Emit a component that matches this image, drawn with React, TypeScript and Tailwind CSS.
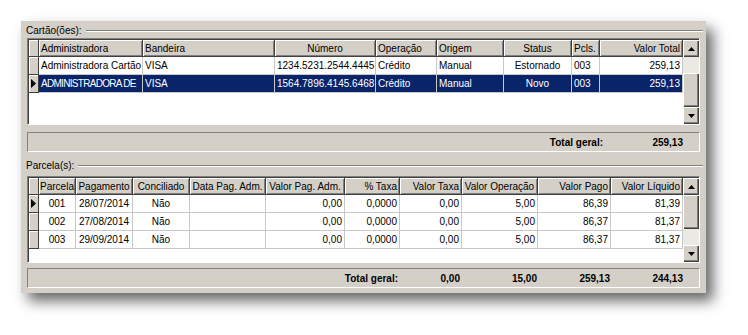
import React from "react";

type Align = "l" | "c" | "r";
type Col = { title: string; w: string; ha: Align; da: Align; tight?: boolean };

const just: Record<Align, string> = {
  l: "justify-start",
  c: "justify-center",
  r: "justify-end",
};

const cartaoCols: Col[] = [
  { title: "Administradora", w: "w-[104px]", ha: "l", da: "l", tight: true },
  { title: "Bandeira", w: "w-[132px]", ha: "l", da: "l" },
  { title: "Número", w: "w-[101px]", ha: "c", da: "l" },
  { title: "Operação", w: "w-[61px]", ha: "l", da: "l" },
  { title: "Origem", w: "w-[67px]", ha: "l", da: "l" },
  { title: "Status", w: "w-[68px]", ha: "c", da: "c" },
  { title: "Pcls.", w: "w-[28px]", ha: "l", da: "l" },
  { title: "Valor Total", w: "w-[83px]", ha: "r", da: "r" },
];

const cartaoRows = [
  ["Administradora Cartão", "VISA", "1234.5231.2544.4445", "Crédito", "Manual", "Estornado", "003", "259,13"],
  ["ADMINISTRADORA DE", "VISA", "1564.7896.4145.6468", "Crédito", "Manual", "Novo", "003", "259,13"],
];

const parcelaCols: Col[] = [
  { title: "Parcela", w: "w-[37px]", ha: "c", da: "c" },
  { title: "Pagamento", w: "w-[57px]", ha: "c", da: "c" },
  { title: "Conciliado", w: "w-[57px]", ha: "c", da: "c" },
  { title: "Data Pag. Adm.", w: "w-[76px]", ha: "c", da: "l" },
  { title: "Valor Pag. Adm.", w: "w-[79px]", ha: "c", da: "r" },
  { title: "% Taxa", w: "w-[55px]", ha: "r", da: "r" },
  { title: "Valor Taxa", w: "w-[62px]", ha: "r", da: "r" },
  { title: "Valor Operação", w: "w-[76px]", ha: "c", da: "r" },
  { title: "Valor Pago", w: "w-[73px]", ha: "r", da: "r" },
  { title: "Valor Líquido", w: "w-[72px]", ha: "r", da: "r" },
];

const parcelaRows = [
  ["001", "28/07/2014", "Não", "", "0,00", "0,0000", "0,00", "5,00", "86,39", "81,39"],
  ["002", "27/08/2014", "Não", "", "0,00", "0,0000", "0,00", "5,00", "86,37", "81,37"],
  ["003", "29/09/2014", "Não", "", "0,00", "0,0000", "0,00", "5,00", "86,37", "81,37"],
];

const raised =
  "bg-[#d4d0c8] shadow-[inset_1px_1px_0_#ffffff,inset_-1px_-1px_0_#404040,inset_-2px_-2px_0_#808080]";

function Arrow({ up }: { up: boolean }) {
  return (
    <div className={`h-[17px] w-[16px] flex items-center justify-center ${raised}`}>
      <svg width="7" height="4" viewBox="0 0 7 4">
        <path d={up ? "M0 4H7L3.5 0Z" : "M0 0H7L3.5 4Z"} fill="#000" />
      </svg>
    </div>
  );
}

function ScrollBar({ top }: { top: string }) {
  return (
    <div className="w-[16px] flex flex-col bg-[#ebe9e4]">
      <Arrow up />
      <div className={top} />
      <div className={`h-[34px] ${raised}`} />
      <div className="flex-1" />
      <Arrow up={false} />
    </div>
  );
}

function Pointer() {
  return (
    <svg width="5" height="9" viewBox="0 0 5 9">
      <path d="M0 0L5 4.5L0 9Z" fill="#000" />
    </svg>
  );
}

function Grid({
  cols,
  rows,
  current,
  selected,
  thumbTop,
}: {
  cols: Col[];
  rows: string[][];
  current: number;
  selected: number;
  thumbTop: string;
}) {
  return (
    <div className="h-[87px] border-t border-l border-[#808080] border-b border-r border-b-white border-r-white">
      <div className="h-full flex bg-white border-t border-l border-[#404040]">
        <div className="flex-1 flex flex-col overflow-hidden">
          <div className="flex">
            <div className="w-[10px] h-[17px] bg-[#d4d0c8] border-r border-b border-[#404040] shadow-[inset_1px_1px_0_#fff]" />
            {cols.map((c, i) => (
              <div
                key={i}
                className={`${c.w} h-[17px] flex items-center ${just[c.ha]} px-[2px] whitespace-nowrap overflow-hidden bg-[#d4d0c8] border-r border-b border-[#404040] shadow-[inset_1px_1px_0_#fff,inset_-1px_-1px_0_#808080]`}
              >
                {c.title}
              </div>
            ))}
          </div>
          {rows.map((r, ri) => (
            <div key={ri} className={`flex ${ri === selected ? "bg-[#0a246a] text-white" : ""}`}>
              <div className="w-[10px] h-[18px] flex items-center justify-center bg-[#d4d0c8] border-r border-b border-[#404040] shadow-[inset_1px_1px_0_#fff]">
                {ri === current && <Pointer />}
              </div>
              {cols.map((c, i) => {
                // caps are wider than in the old bitmap font, squeeze them a bit
                const squeeze = c.tight && r[i] === r[i].toUpperCase();
                return (
                  <div
                    key={i}
                    className={`${c.w} h-[18px] flex items-center ${just[c.da]} ${squeeze ? "tracking-[-0.7px] pl-[2px]" : "px-[2px]"} whitespace-nowrap overflow-hidden border-r border-b border-[#c8c8c8]`}
                  >
                    {r[i]}
                  </div>
                );
              })}
            </div>
          ))}
        </div>
        <ScrollBar top={thumbTop} />
      </div>
    </div>
  );
}

function GroupLabel({ text }: { text: string }) {
  return (
    <div className="h-[13px] flex items-center -ml-[1px] -mr-[3px]">
      <span className="leading-none">{text}</span>
      <div className="flex-1 ml-[4px] h-[2px] border-t border-[#808080] border-b border-b-white" />
    </div>
  );
}

export default function App() {
  return (
    <div className="w-[748px] h-[335px] bg-white pt-[21px] pl-[21px] font-['Liberation_Sans',Arial,sans-serif] text-[10px] text-black">
      <div className="w-[685px] h-[272px] bg-[#d4d0c8] px-[6px] pt-[3px] shadow-[7px_8px_13px_rgba(0,0,0,0.6)]">
        <GroupLabel text="Cartão(ões):" />
        <div className="mt-[1px]">
          <Grid cols={cartaoCols} rows={cartaoRows} current={1} selected={1} thumbTop="h-[16px]" />
        </div>
        <div className="mt-[7px] h-[20px] flex items-center justify-end pr-[16px] font-bold border border-[#808080] border-b-white border-r-white">
          <span>Total geral:</span>
          <span className="w-[80px] text-right">259,13</span>
        </div>

        <div className="mt-[7px]">
          <GroupLabel text="Parcela(s):" />
        </div>
        <div className="mt-[4px]">
          <Grid cols={parcelaCols} rows={parcelaRows} current={0} selected={-1} thumbTop="h-0" />
        </div>
        <div className="mt-[5px] h-[20px] flex items-center justify-end pr-[16px] font-bold border border-[#808080] border-b-white border-r-white">
          <span className="pr-[2px]">Total geral:</span>
          <span className="w-[60px] text-right">0,00</span>
          <span className="w-[77px] text-right">15,00</span>
          <span className="w-[73px] text-right">259,13</span>
          <span className="w-[73px] text-right">244,13</span>
        </div>
      </div>
    </div>
  );
}
